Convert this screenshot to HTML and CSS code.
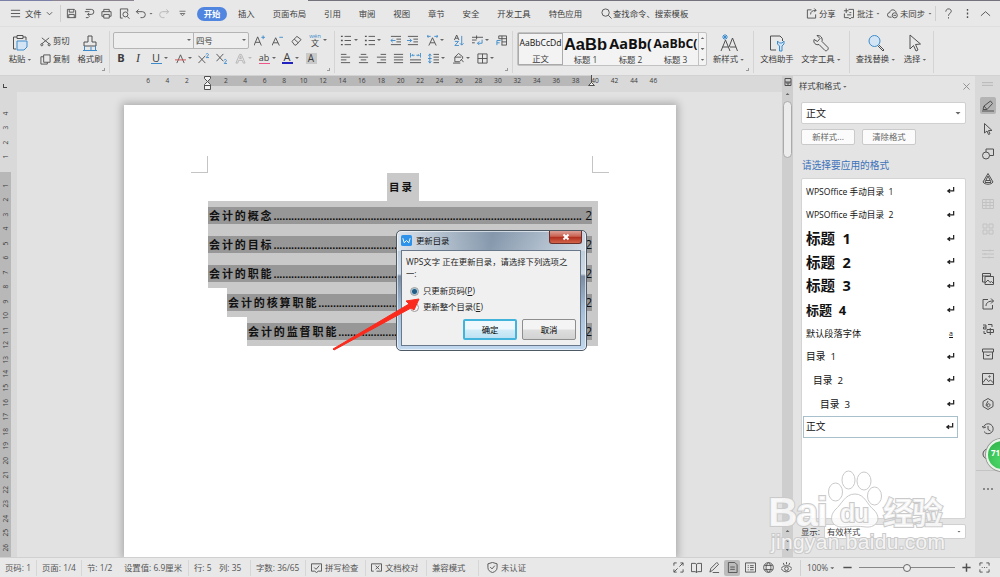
FILE: index.html
```html
<!DOCTYPE html>
<html lang="zh-CN">
<head>
    <meta charset="UTF-8">
    <meta name="viewport" content="width=device-width, initial-scale=1.0">
    <title>WPS文字</title>
    <link rel="stylesheet" href="styles.css">
</head>
<body>
    <svg class="defs">
        <symbol id="paragraph" viewBox="0 0 12 12"><path d="M1 1.500h2M1 6h2M1 10.500h2" stroke-width="1.500"/><path d="M5 1.500h7M5 6h7M5 10.500h7"/></symbol>
        <symbol id="return" viewBox="0 0 10 10"><path d="M8.500 1v4.500H2M4.500 3.500L2 5.500l2.500 2" stroke-width="1.400"/></symbol>
    </svg>

    <div class="tab-strip"><span class="strip-blue"></span><span class="strip-mauve"></span><span class="strip-active"></span><span class="strip-rest"></span></div>

    <div class="menubar">
        <div class="file-menu">
            <svg class="icon" viewBox="0 0 12 12"><path d="M1 2.500h10M1 6h10M1 9.500h10"/></svg>
            <span>文件</span>
            <svg class="chev" viewBox="0 0 8 8"><path d="M1 2.500l3 3 3-3"/></svg>
        </div>
        <div class="quick">
            <svg class="icon" viewBox="0 0 12 12"><path d="M1.500 1.500h7.500l1.500 1.500v7.500h-9zM3.500 1.500v3h5v-3M3 10.500V7h6v3.500"/></svg>
            <svg class="icon" viewBox="0 0 12 12"><path d="M2 1.500h6a2.700 2.700 0 0 1 0 5.500H4M1 4h5M5.500 5.500L4 7l1.500 1.500M2 10.500h2.500L6 9"/></svg>
            <svg class="icon" viewBox="0 0 12 12"><path d="M3 4V1.500h6V4M3 9H1V4h10v5H9M3 7h6v4H3z"/></svg>
            <svg class="icon" viewBox="0 0 12 12"><path d="M4 11H1.500V1h8v3M9 9.500l2.500 2"/><circle cx="7" cy="7" r="2.700"/></svg>
            <svg class="icon" viewBox="0 0 12 12"><path d="M4 1.500L1.500 4 4 6.500M1.500 4H8a3 3 0 0 1 0 6.500H6"/></svg>
            <i class="caret"></i>
            <svg class="icon faint" viewBox="0 0 12 12"><path d="M8 1.500L10.500 4 8 6.500M10.500 4H4a3 3 0 0 0 0 6.500h2"/></svg>
            <svg class="icon small" viewBox="0 0 12 12"><path d="M2 3h8M3 6h6L6 9z"/></svg>
        </div>
        <span class="tab active">开始</span>
        <div class="tabs">
            <span>插入</span><span>页面布局</span><span>引用</span><span>审阅</span><span>视图</span><span>章节</span><span>安全</span><span>开发工具</span><span>特色应用</span>
        </div>
        <div class="search">
            <svg class="icon" viewBox="0 0 12 12"><circle cx="5" cy="5" r="4"/><path d="M8 8l3.500 3.500"/></svg>
            <span>查找命令、搜索模板</span>
        </div>
        <div class="account">
            <svg class="icon" viewBox="0 0 12 12"><path d="M6 2H1.500v9h9V7M5 7c0-3 2-4.500 6-4.500M9 .5l2 2-2 2"/></svg><span>分享</span>
            <svg class="icon" viewBox="0 0 12 12"><path d="M6 1.500h5.500v9H9L7.500 12 6 10.500H1.500V6M1 3h5M3.500.5v5M4.500 7.500h4.500M7 5h2"/></svg><span>批注</span><i class="caret"></i>
            <svg class="icon" viewBox="0 0 12 12"><path d="M5 10H3a2.500 2.500 0 0 1 0-5c.5-4 6-4 7 0"/><circle cx="8.500" cy="8" r="2.800"/><path d="M7 8h3"/></svg><span>未同步</span><i class="caret"></i>
        </div>
        <div class="window-tools">
            <svg class="icon" viewBox="0 0 12 12"><path d="M3 4c0-4 6-4 6-.5C9 6 6 5.500 6 8.500M6 10v1.500"/></svg>
            <svg class="icon" viewBox="0 0 12 12"><path d="M6 1v2M6 5v2M6 9v2" stroke-width="1.500"/></svg>
            <svg class="icon" viewBox="0 0 12 12"><path d="M1 8.500L6 4l5 4.500"/></svg>
        </div>
    </div>

    <div class="ribbon">
        <div class="group clipboard">
            <div class="tool paste">
                <svg class="big" viewBox="0 0 18 18"><path d="M6 3H2.500v12H5M12 3h3v3M6 1.500h6v3H6z"/><path class="blue fill" d="M6 7h10v6l-3 3H6z"/></svg>
                <span>粘贴<i class="caret"></i></span>
            </div>
            <div class="clip-list">
                <span><svg class="icon" viewBox="0 0 12 12"><path d="M2 2l8 6.500M10 2L2 8.500"/><circle cx="2" cy="9.500" r="1.200"/><circle cx="10" cy="9.500" r="1.200"/></svg>剪切</span>
                <span><svg class="icon" viewBox="0 0 12 12"><path d="M4 1h7v8H4zM4 3H1v8h7V9"/></svg>复制</span>
            </div>
            <div class="tool painter">
                <svg class="big" viewBox="0 0 18 18"><path d="M7 8V2h4v6h4v4H3V8z"/><path class="blue" d="M3.500 12v4.500h11V12M10 16v-3M2 16.500h14"/></svg>
                <span>格式刷</span>
            </div>
            <b class="corner"></b>
        </div>

        <div class="group font">
            <div class="font-top">
                <div class="combo"><span class="family"><i class="caret"></i></span><span class="size">四号<i class="caret"></i></span></div>
                <div class="cells cells-a">
                    <svg class="icon" viewBox="0 0 12 12"><path d="M0 11.500L4 2l4 9.500M1.500 8h5"/><path class="blue" d="M8 2.500h4M10 .5v4"/></svg>
                    <svg class="icon" viewBox="0 0 12 12"><path d="M0 11.500L4 3l4 8.500M1.500 8.500h5"/><path class="blue" d="M8 2.500h4"/></svg>
                    <svg class="icon" viewBox="0 0 12 12"><path d="M1 7l5.500-5.500L11 5l-5.500 6H4zM3.500 4.500L8 8.500"/></svg>
                    <span class="wen"><em>wén</em>文</span>
                    <i class="caret"></i>
                </div>
            </div>
            <div class="cells cells-b">
                <b class="glyph">B</b>
                <span class="glyph italic">I</span>
                <span class="glyph under">U</span><i class="caret"></i>
                <svg class="icon" viewBox="0 0 12 12"><path d="M2 11l4-9 4 9"/><path class="red" d="M0 7.500h12"/></svg><i class="caret"></i>
                <svg class="icon" viewBox="0 0 12 12"><path d="M.5 3L8 11M8 3L.5 11"/><path class="blue" d="M9 1.500c0-1.500 2.500-1 2.500.3L9 5h3"/></svg>
                <svg class="icon" viewBox="0 0 12 12"><path d="M.5 1L8 9M8 1L.5 9"/><path class="blue" d="M9 8c0-1.500 2.500-1 2.500.3L9 11.500h3"/></svg>
                <svg class="icon faint" viewBox="0 0 12 12"><path d="M1 11L5 1.500h2L11 11H9L8 8H4l-1 3zM5 6h2L6 3z"/></svg><i class="caret pale"></i>
                <span class="glyph mark">ab</span><i class="caret"></i>
                <span class="glyph color">A</span><i class="caret"></i>
                <span class="glyph shade">A</span>
            </div>
            <b class="corner"></b>
        </div>

        <div class="group para">
            <div class="cells cells-c">
                <svg class="icon"><use href="#paragraph"/></svg><i class="caret"></i>
                <svg class="icon"><use href="#paragraph"/></svg><i class="caret"></i>
                <svg class="icon" viewBox="0 0 12 12"><path d="M1 1.500h11M7 4.500h5M7 7.500h5M1 10.500h11"/><path class="blue" d="M1 6h5M3 4L1 6l2 2"/></svg>
                <svg class="icon" viewBox="0 0 12 12"><path d="M1 1.500h11M7 4.500h5M7 7.500h5M1 10.500h11"/><path class="blue" d="M0 6h5M3 4l2 2-2 2"/></svg>
                <svg class="icon" viewBox="0 0 12 12"><path d="M2 11.500L6 3l4 8.500M3.500 8.500h5"/><path class="blue" d="M0 1.500h4M1.500 0L0 1.500 1.500 3M12 1.500H8M10.500 0L12 1.500 10.500 3"/></svg><i class="caret"></i>
                <svg class="icon" viewBox="0 0 12 12"><path d="M1.500 5.500L4 0l2.500 5.500M2.500 3.500h3"/><path class="blue" d="M2 7h4l-4 4.500h4.500M9.500 1v10M7.500 9l2 2 2-2"/></svg>
                <svg class="icon" viewBox="0 0 12 12"><path d="M0 2.500h12M5 .5v4M0 5.500h5M0 8.500h3"/><path class="blue" d="M11 5v4H6M8 7L6 9l2 2"/></svg><i class="caret"></i>
                <svg class="icon" viewBox="0 0 12 12"><path d="M3 4V1h8.500v10H6M3 4h8.500M6.500 1v10M6.500 7.500h5"/><path class="blue" d="M1 11V6h4M1 8.500h3"/></svg>
            </div>
            <div class="cells cells-d">
                <svg class="icon" viewBox="0 0 12 12"><path d="M1 1.500h6M1 4.500h10M1 7.500h6M1 10.500h10"/></svg>
                <svg class="icon" viewBox="0 0 12 12"><path d="M3 1.500h6M1 4.500h10M3 7.500h6M1 10.500h10"/></svg>
                <svg class="icon" viewBox="0 0 12 12"><path d="M5 1.500h6M1 4.500h10M5 7.500h6M1 10.500h10"/></svg>
                <svg class="icon" viewBox="0 0 12 12"><path d="M1 1.500h10M1 4.500h10M1 7.500h10M1 10.500h10"/></svg>
                <svg class="icon" viewBox="0 0 12 12"><path d="M0 7.500h12M0 10.500h12"/><path class="blue" d="M.5 0v5M11.500 0v5M2 2.500h3M7 2.500h3M3 1.500l-1 1 1 1M9 1.500l1 1-1 1"/></svg>
                <svg class="icon" viewBox="0 0 12 12"><path d="M6 1.500h6M6 4.500h6M6 7.500h6M6 10.500h6"/><path class="blue" d="M2 1v10M.5 3L2 1l1.500 2M.5 9L2 11l1.500-2M0 6h4"/></svg><i class="caret"></i>
                <svg class="icon" viewBox="0 0 12 12"><path d="M2 9.500V4.500L6 .5l4.500 3.500v2L7 9.500zM0 11h8M2 4.500h7M9 7l2.500 3"/></svg><i class="caret"></i>
                <svg class="icon" viewBox="0 0 12 12"><path d="M1 1h10v10H1zM6 1v10M1 6h10"/></svg><i class="caret"></i>
            </div>
            <b class="corner"></b>
        </div>

        <div class="group styles">
            <div class="gallery">
                <div class="style-item selected"><span class="sample">AaBbCcDd</span><span>正文</span></div>
                <div class="style-item"><span class="sample h1">AaBb</span><span>标题 1</span></div>
                <div class="style-item"><span class="sample h2">AaBb(</span><span>标题 2</span></div>
                <div class="style-item"><span class="sample h3">AaBbC(</span><span>标题 3</span></div>
                <div class="spinner"><i class="caret up"></i><i class="caret"></i><i class="caret lined"></i></div>
            </div>
            <div class="tool new-style">
                <svg class="big" viewBox="0 0 18 18"><path d="M1 17L5.500 6 10 17M2.500 13h6M9 13l3.500-9L17.500 17M10 13h6"/><path class="blue" d="M5 0v6M2 3h6M3 1l4 4M7 1L3 5"/></svg>
                <span>新样式<i class="caret"></i></span>
            </div>
            <b class="corner"></b>
        </div>

        <div class="group helpers">
            <div class="tool">
                <svg class="big" viewBox="0 0 18 18"><path d="M8 16H2.500V2H12l2.500 2.500V7"/><path class="blue fill" d="M9.500 7v3l2 2v5h2.500v-5l2-2V7l-2 2h-2.500z"/></svg>
                <span>文档助手</span>
            </div>
            <div class="tool">
                <svg class="big" viewBox="0 0 18 18"><path d="M5 1.500l3 3-2.500 3-3.500-2c-1 3.500 2 6 5 5l6 6c1.500 1 4-1 3-3L10 7.500c1-3.500-1.500-6.500-5-6z"/></svg>
                <span>文字工具<i class="caret"></i></span>
            </div>
        </div>
        <div class="group find">
            <div class="tool">
                <svg class="big" viewBox="0 0 18 18"><circle class="blue fill" cx="7.500" cy="7" r="5.500"/><path d="M12 11l5 5-1 1-5-5"/></svg>
                <span>查找替换<i class="caret"></i></span>
            </div>
            <div class="tool">
                <svg class="big" viewBox="0 0 18 18"><path d="M4 1v14l3.500-3.500L10 17l2-1-2.500-5.500 5-.5z"/></svg>
                <span>选择<i class="caret"></i></span>
            </div>
        </div>
    </div>

    <div class="workspace">
        <div class="editor">
            <div class="ruler">
                <i class="tab-stop"></i>
                <div class="ruler-marks" id="ruler"></div>
                <svg class="marker first" viewBox="0 0 7 14"><path d="M.5.5h6v2l-3 3-3-3zM3.500 5.500l3 3v5h-6v-5zM.5 9.500h6"/></svg>
                <svg class="marker last" viewBox="0 0 7 14"><path d="M3.500 0v8M3.500 7.500l3 3h-6z"/></svg>
            </div>
            <div class="stage">
                <div class="vruler" id="vruler"></div>
                <div class="canvas">
                    <div class="page">
                        <div class="crops"><i></i><i></i></div>
                        <div class="toc-title">目录</div>
                        <div class="toc">
                            <div class="line"><p><span>会计的概念</span><u></u><em>2</em></p></div>
                            <div class="line"><p><span>会计的目标</span><u></u><em>2</em></p></div>
                            <div class="line"><p><span>会计的职能</span><u></u><em>2</em></p></div>
                            <div class="line level2"><p><span>会计的核算职能</span><u></u><em>2</em></p></div>
                            <div class="line level3"><p><span>会计的监督职能</span><u></u><em>2</em></p></div>
                        </div>
                    </div>
                </div>
            </div>
        </div>

        <div class="scrollbar">
            <svg viewBox="0 0 8 8"><path d="M1 .5h6v7H1zM1 4h6M3 4v2h2V4"/></svg>
            <i class="caret up"></i>
            <div class="thumb"></div>
            <div class="scroll-end"><i class="caret up"></i><b></b><i class="caret"></i></div>
        </div>

        <div class="panel">
            <div class="panel-head"><span>样式和格式<i class="caret"></i></span><svg class="chev" viewBox="0 0 8 8"><path d="M.5.5l7 7M7.500.5l-7 7"/></svg></div>
            <div class="select current">正文<i class="caret"></i></div>
            <div class="panel-buttons"><button>新样式...</button><button>清除格式</button></div>
            <div class="panel-label">请选择要应用的格式</div>
            <div class="style-list">
                <div class="row toc-style"><span>WPSOffice 手动目录&nbsp; 1</span><svg><use href="#return"/></svg></div>
                <div class="row toc-style"><span>WPSOffice 手动目录&nbsp; 2</span><svg><use href="#return"/></svg></div>
                <div class="row heading"><span>标题&nbsp; 1</span><svg><use href="#return"/></svg></div>
                <div class="row heading"><span>标题&nbsp; 2</span><svg><use href="#return"/></svg></div>
                <div class="row heading"><span>标题&nbsp; 3</span><svg><use href="#return"/></svg></div>
                <div class="row heading h4"><span>标题&nbsp; 4</span><svg><use href="#return"/></svg></div>
                <div class="row"><span>默认段落字体</span><u>a</u></div>
                <div class="row toc-entry"><span>目录&nbsp; 1</span><svg><use href="#return"/></svg></div>
                <div class="row toc-entry in1"><span>目录&nbsp; 2</span><svg><use href="#return"/></svg></div>
                <div class="row toc-entry in2"><span>目录&nbsp; 3</span><svg><use href="#return"/></svg></div>
                <div class="row toc-entry chosen"><span>正文</span><svg><use href="#return"/></svg></div>
            </div>
            <div class="show"><span>显示:</span><div class="select">有效样式<i class="caret"></i></div></div>
        </div>

        <div class="sidebar">
            <svg class="grip" viewBox="0 0 12 12"><path d="M0 4.500h12M0 7.500h12"/></svg>
            <span class="on"><svg viewBox="0 0 12 12"><path d="M1 9.500l1-3.500 6.500-5 2 2.500L5 9.500zM0 11h12M2 6l3 3.500"/></svg></span>
            <span><svg viewBox="0 0 12 12"><path d="M2.500.5v9.500l2.500-2 1.500 3.500 1.500-.7L6.500 7.500H10z"/></svg></span>
            <span><svg viewBox="0 0 12 12"><circle cx="4" cy="7.500" r="3.500"/><path d="M4 4V1h7.500v6.500h-4"/></svg></span>
            <span><svg viewBox="0 0 12 12"><path d="M6 .5l5 8.500c-2 3-8 3-10 0zM3 9l3-6 3 6M4 7.500h4M3 9.500h6"/></svg></span>
            <span class="dim"><svg viewBox="0 0 12 12"><path d="M.5 1.500h11v9H.5zM.5 4.500h11M.5 7.500h11M4 1.500v9M8 1.500v9"/></svg></span>
            <span class="dim"><svg viewBox="0 0 12 12"><path d="M1 1h4v4H1zM7 1h4v4H7zM1 7h4v4H1zM7 7h4v4H7z"/></svg></span>
            <span class="dim"><svg viewBox="0 0 12 12"><path d="M0 2.500h12M0 6h12M0 9.500h12M8 1.500v2M3 5v2M7 8.500v2"/></svg></span>
            <span><svg viewBox="0 0 12 12"><path d="M3 9H.5V.5h8V3M.5 3h8M3 3.500h8.500v8H3zM3 10l3-3 2 2.500 1.500-1 2 2"/></svg></span>
            <span><svg viewBox="0 0 12 12"><path d="M6 1.500H1v9.500h9.500V7M4 8c0-3 2-5 7.500-5M9 .5L11.500 3 9 5.500"/></svg></span>
            <span><svg viewBox="0 0 12 12"><path d="M1 2h3v4H1.500V4H4M6 1.500h4V4M5 6.500h6.500v3H5zM8.300 5v7M2 8v2.500h2"/></svg></span>
            <span><svg viewBox="0 0 12 12"><path d="M.5 1h11v3H.5zM1.500 4v7h9V4M4 6.500c0 1.500 4 1.500 4 0"/></svg></span>
            <span><svg viewBox="0 0 12 12"><path d="M.5.5h11v11H.5zM1 9.500l3-4 2.500 3L8.500 7l3 3"/><circle cx="7.500" cy="3.500" r=".7"/></svg></span>
            <span><svg viewBox="0 0 12 12"><path d="M6 .5l5 3v5l-5 3-5-3v-5zM6 3L4 7c1 3 4 2 4 0S5 5.500 5 8"/></svg></span>
            <span><svg viewBox="0 0 12 12"><path d="M1.500 4A5 5 0 1 1 2 8.500M0 3l1.500 2L4 4M6 3v3.500l2.500 1.500"/></svg></span>
            <span><svg viewBox="0 0 12 12"><circle cx="6" cy="6" r="5"/><path d="M4.500 4.500c0-2 3-2 3 0L6 7v2"/></svg></span>
            <hr>
            <span class="more"><svg viewBox="0 0 12 12"><path d="M1 6h2M5 6h2M9 6h2" stroke-width="1.800"/></svg></span>
            <div class="ball">71</div>
        </div>
    </div>

    <div class="statusbar">
        <span>页码: 1</span><span class="sep">页面: 1/4</span><span class="sep">节: 1/2</span><span>设置值: 6.9厘米</span><span class="sep">行: 5</span><span>列: 35</span><span class="sep">字数: 36/65</span>
        <span class="sep"><svg viewBox="0 0 12 12"><path d="M4 10H.5V2h11v8H8l-2 1.500zM3.500 6l2 2L9 4"/></svg>拼写检查</span>
        <span class="sep"><svg viewBox="0 0 12 12"><path d="M3 10H.5V2h11v8H6M5 4l4 4M9 4L5 8"/></svg>文档校对</span>
        <span class="sep">兼容模式</span>
        <span class="sep check"><svg viewBox="0 0 12 12"><path d="M6 .5l5 1.500v4c0 3-2 4.500-5 5.500C3 10.500 1 9 1 6V2zM3.500 5.500l2 2 3-3.500"/></svg>未认证</span>
        <div class="views">
            <i><svg viewBox="0 0 12 12"><path d="M1 4V1h3M8 1h3v3M11 8v3H8M4 11H1V8M7 5l4-4M5 7l-4 4"/></svg></i>
            <i><svg viewBox="0 0 12 12"><path d="M.5 1.500h4L6 2.500l1.500-1h4v9h-4L6 11.500l-1.500-1h-4zM6 2.500v9"/></svg></i>
            <i><svg viewBox="0 0 12 12"><path d="M1 11l1-4 6.500-6.500 2 2L4 9zM4 11.500h7"/></svg></i>
            <i class="on"><svg viewBox="0 0 12 12"><path d="M1.500.5h7l2.500 2.500v8.500H1.500zM3.500 5.500h5M3.500 8h5"/></svg></i>
            <i><svg viewBox="0 0 12 12"><path d="M.5 1h11v10H.5zM3 4h1M5.500 4H9.500M3 6h1M5.500 6H9.500M3 8.500h1M5.500 8.500H9.500"/></svg></i>
            <i><svg viewBox="0 0 12 12"><circle cx="6" cy="6" r="5.300"/><path d="M1.500 3.700h9M1.500 8.300h9M6 .7c-3.500 3-3.500 7.600 0 10.600M6 .7c3.500 3 3.500 7.600 0 10.600"/></svg></i>
            <i><svg viewBox="0 0 12 12"><path d="M0 7c3-4 9-4 12 0-3 5-9 5-12 0M6 0v2.500M2.500 1l1 2.500M9.500 1l-1 2.500"/><circle cx="6" cy="7.300" r="2"/></svg></i>
        </div>
        <div class="zoom">
            <span>100%<i class="caret"></i></span>
            <svg viewBox="0 0 12 12"><path d="M1.500 6h9" stroke-width="1.600"/></svg>
            <div class="slider"><b></b></div>
            <svg viewBox="0 0 12 12"><path d="M1.500 6h9M6 1.500v9" stroke-width="1.600"/></svg>
            <svg viewBox="0 0 12 12"><path d="M1 4V1h3M8 1h3v3M11 8v3H8M4 11H1V8M5.500 6h1M3 6h1M8 6h1"/></svg>
        </div>
    </div>

    <div class="dialog">
        <div class="dialog-title">
            <svg viewBox="0 0 12 12"><rect width="12" height="12" rx="2"/><path d="M2 3.500l1.500 5L6 6l2.500 2.500 1.500-5"/></svg>
            <span>更新目录</span>
            <button class="close"><svg viewBox="0 0 8 8"><path d="M1.500 1.500l5 5M6.500 1.500l-5 5"/></svg></button>
        </div>
        <div class="dialog-body">
            <p>WPS文字 正在更新目录，请选择下列选项之一:</p>
            <label><i class="radio checked"></i>只更新页码(<u>P</u>)</label>
            <label><i class="radio"></i>更新整个目录(<u>E</u>)</label>
            <div class="actions"><button class="ok">确定</button><button>取消</button></div>
        </div>
    </div>

    <svg class="arrow" viewBox="0 0 90 54"><path d="M1 52L77 7l-3-3 13-2-5 11-3-2L2 53z"/></svg>

    <svg class="watermark" viewBox="0 0 190 96">
        <ellipse cx="68.500" cy="22" rx="7" ry="9"/><ellipse cx="81.500" cy="10" rx="6.500" ry="9"/><ellipse cx="97" cy="11" rx="7" ry="9"/><ellipse cx="107.500" cy="26" rx="7" ry="9"/>
        <path d="M88 24c10 0 12 11 19 16 8 8 3 18-8 17-7-1-15-1-22 0-12 1-16-9-9-17 7-6 10-16 20-16z"/>
        <text class="brand" x="1" y="56" textLength="60">Bai</text>
        <text class="du" x="73" y="52" textLength="29">du</text>
        <text class="brand cn" x="116" y="54" textLength="60">经验</text>
        <text class="url" x="4" y="79" textLength="174">jingyan.baidu.com</text>
    </svg>

    <script>
        const ruler = document.getElementById('ruler');
        for (let n = -6; n <= 46; n += 2) {
            const mark = document.createElement('span');
            mark.textContent = n === 0 ? '' : Math.abs(n);
            ruler.appendChild(mark);
        }

        const vruler = document.getElementById('vruler');
        for (let n = -4; n <= 26; n++) {
            if (n === 0) continue;
            const mark = document.createElement('span');
            mark.textContent = Math.abs(n);
            vruler.appendChild(mark);
        }

        // dot leaders run from the entry to its page number
        document.querySelectorAll('.toc u').forEach(leader => {
            leader.textContent = '.'.repeat(Math.floor(leader.clientWidth / 2.96));
        });
    </script>
</body>
</html>
```
FILE: styles.css
```css
* {
    box-sizing: border-box;
}
body {
    margin: 0;
    width: 1000px;
    height: 577px;
    overflow: hidden;
    position: relative;
    background: #e8e8e8;
    color: #3c3c3c;
    font-family: "Open Sans", "Noto Sans CJK SC", sans-serif;
    font-size: 8.4px;
    line-height: 12px;
    white-space: nowrap;
}
svg {
    fill: none;
    stroke: #505050;
    stroke-width: 1;
    flex: none;
}
.defs {
    display: none;
}
.blue {
    stroke: #3d8bcb;
}
.red {
    stroke: #d05050;
}
.fill {
    fill: #d3e5f5;
}
.icon {
    width: 11px;
    height: 11px;
}
.icon.small {
    width: 9px;
}
.faint {
    stroke: #b5b5b5;
}
.big {
    width: 18px;
    height: 18px;
}
.chev {
    width: 7px;
    height: 7px;
}
.caret {
    display: inline-block;
    flex: none;
    width: 4px;
    height: 2px;
    margin-left: 2px;
    vertical-align: middle;
    background: #666;
    clip-path: polygon(0 0, 100% 0, 50% 100%);
}
.caret.up {
    clip-path: polygon(50% 0, 100% 100%, 0 100%);
}
.pale {
    background: #bbb;
}

/* title strip and menu */
.tab-strip {
    display: flex;
    height: 1px;
}
.strip-blue {
    width: 52px;
    background: #7a80a8;
}
.strip-mauve {
    width: 82px;
    background: #8c8490;
}
.strip-active {
    width: 174px;
    background: #e8e8e8;
}
.strip-rest {
    flex: 1;
    background: #76727c;
}
.menubar {
    display: flex;
    align-items: center;
    height: 26px;
    border-bottom: 1px solid #dfdfdf;
}
.file-menu {
    display: flex;
    align-items: center;
    gap: 4px;
    width: 61px;
    height: 17px;
    padding-left: 10px;
    border-right: 1px solid #cfcfcf;
}
.quick {
    display: grid;
    grid-template-columns: repeat(4, 17.5px) 15px 6px 20px 16px;
    justify-items: center;
    align-items: center;
    width: 136px;
    padding-left: 2px;
}
.quick .caret {
    margin-left: 0;
}
.tab.active {
    width: 30px;
    border-radius: 7px;
    background: #5086e0;
    color: #fff;
    font-weight: bold;
    text-align: center;
    line-height: 14px;
}
.tabs {
    display: flex;
    gap: 17.9px;
    width: 374px;
    padding-left: 11px;
}
.search {
    display: flex;
    align-items: center;
    gap: 1px;
    width: 205px;
}
.account {
    display: grid;
    grid-template-columns: 13px 24px 14px 17px 13px 13px 26px 9px;
    align-items: center;
    width: 130px;
    height: 15px;
    border-right: 1px solid #cfcfcf;
}
.window-tools {
    display: flex;
    gap: 7.5px;
    padding-left: 7px;
}

/* ribbon */
.ribbon {
    display: flex;
    height: 49px;
    padding-top: 4px;
    border-bottom: 1px solid #d2d2d2;
}
.group {
    display: flex;
    position: relative;
    height: 42px;
    border-right: 1px solid #d4d4d4;
}
.corner {
    position: absolute;
    right: 4px;
    bottom: 2px;
    width: 3px;
    height: 3px;
    border-right: 1px solid #999;
    border-bottom: 1px solid #999;
}
.tool {
    display: flex;
    flex-direction: column;
    align-items: center;
    padding-top: 3px;
}
.tool .big {
    margin-bottom: 1px;
}
.clipboard {
    width: 110px;
}
.paste {
    width: 40px;
}
.clip-list {
    display: grid;
    grid-template-rows: 18px 18px;
    align-items: center;
    width: 32px;
}
.clip-list span {
    display: flex;
    align-items: center;
    gap: 2px;
    padding-top: 2px;
}
.painter {
    width: 36px;
}
.font {
    flex-direction: column;
    width: 225px;
    padding-left: 3px;
}
.font-top {
    display: flex;
    align-items: center;
    height: 18px;
}
.combo {
    display: flex;
    width: 136px;
    height: 17px;
    border: 1px solid #b4b4b4;
    border-radius: 2px;
    background: #eee;
    line-height: 15px;
}
.family, .size {
    display: flex;
    align-items: center;
    justify-content: flex-end;
    width: 80px;
    padding-right: 2px;
    border-right: 1px solid #b4b4b4;
}
.size {
    flex: 1;
    justify-content: space-between;
    padding-left: 2px;
    border: none;
}
.cells {
    display: grid;
    justify-content: start;
    align-items: center;
    height: 18px;
}
.cells .caret {
    margin: 0;
}
.cells-a {
    grid-template-columns: 18px 19px 19px 13.5px 4px;
    padding-left: 4.5px;
}
.cells-b {
    grid-template-columns: 17px 18px 13.5px 10.5px 13.5px 9.5px 18px 19px 13.5px 10.5px 13.5px 9.5px 13.5px 10.5px 11px;
    padding-left: 2.5px;
}
.wen {
    display: flex;
    flex-direction: column;
    align-items: center;
    width: 11px;
    font-size: 8px;
    line-height: 7px;
}
.wen em {
    color: #3d8bcb;
    font-size: 6px;
    font-style: normal;
    line-height: 5px;
}
.glyph {
    width: 11px;
    font-size: 11px;
    line-height: 12px;
    text-align: center;
}
.italic {
    font-family: "Liberation Serif", serif;
    font-style: italic;
    font-size: 12px;
}
.under {
    border-bottom: 1px solid #3d8bcb;
    line-height: 10px;
}
.mark {
    font-size: 9px;
    line-height: 10px;
    border-bottom: 1px solid #e58;
}
.color {
    line-height: 10px;
    border-bottom: 2px solid #2222c0;
}
.shade {
    height: 11px;
    background: #c9c9c9;
    font-size: 10px;
    line-height: 11px;
}
.para {
    flex-direction: column;
    width: 178px;
    padding-left: 4.5px;
}
.cells-c {
    grid-template-columns: 14.5px 9.5px 13.5px 12.5px 17px 20px 13.5px 12.5px 19px 13.5px 10.5px 11px;
}
.cells-d {
    grid-template-columns: 18px 18px 17px 17px 18px 13.5px 11.5px 13.5px 10.5px 13.5px 4px;
}
.styles {
    width: 241px;
}
.gallery {
    display: flex;
    width: 190px;
    height: 34px;
    margin: 1px 0 0 4px;
    border: 1px solid #c2c2c2;
    border-radius: 2px;
    background: #f3f3f3;
}
.style-item {
    display: flex;
    flex-direction: column;
    align-items: center;
    width: 45px;
    overflow: hidden;
    line-height: 11px;
}
.style-item.selected {
    border: 1px solid #aaa;
}
.sample {
    height: 21px;
    color: #111;
    font-size: 8.6px;
    line-height: 21px;
}
.selected .sample {
    line-height: 19px;
    height: 20px;
}
.sample.h1 {
    font: bold 16.5px/22px "Liberation Sans", sans-serif;
}
.sample.h2 {
    font: bold 14.5px/22px "Open Sans", sans-serif;
}
.sample.h3 {
    font: bold 12.3px/22px "Open Sans", sans-serif;
}
.spinner {
    display: flex;
    flex: 1;
    flex-direction: column;
    align-items: center;
    justify-content: space-around;
    border-left: 1px solid #c2c2c2;
}
.spinner .caret {
    margin: 0;
}
.new-style {
    flex: 1;
    padding-right: 3px;
}
.helpers {
    width: 96px;
}
.helpers .tool {
    width: 46px;
}
.helpers .tool + .tool {
    width: 42px;
}
.find {
    width: 84px;
    padding-left: 3px;
}
.find .tool {
    width: 45px;
}
.find .tool + .tool {
    width: 34px;
}

/* document area */
.workspace {
    display: flex;
    height: 481px;
}
.editor {
    width: 782px;
    background: #d9d9d9;
}
.ruler {
    position: relative;
    height: 16px;
    padding-left: 138.3px;
    background: linear-gradient(#b8b8b8, #b8b8b8) 207px 0 / 385px 10px no-repeat;
}
.tab-stop {
    position: absolute;
    left: 3px;
    top: 8px;
    width: 4px;
    height: 4px;
    border-left: 1px solid #444;
    border-bottom: 1px solid #444;
}
.ruler-marks {
    display: flex;
    font-size: 6.6px;
    line-height: 10px;
}
.ruler-marks span {
    flex: none;
    width: 19.45px;
    text-align: center;
}
.marker {
    position: absolute;
    top: 0;
    width: 7px;
    height: 14px;
    fill: #f4f4f4;
}
.first {
    left: 204px;
}
.last {
    left: 588px;
    top: -1px;
}
.stage {
    display: flex;
    height: 465px;
}
.vruler {
    width: 17px;
    padding-top: 14px;
    background: linear-gradient(#b8b8b8, #b8b8b8) 0 80px / 11px 400px no-repeat;
}
.vruler span {
    display: block;
    width: 11px;
    height: 14.48px;
    font-size: 6.6px;
    line-height: 11px;
    text-align: center;
    writing-mode: vertical-rl;
    transform: rotate(180deg);
}
.vruler span:nth-child(4) {
    margin-bottom: 14px;
}
.canvas {
    flex: 1;
    padding: 13px 0 0 107px;
    overflow: hidden;
    background: #e2e2e2;
}
.page {
    width: 552px;
    height: 452px;
    padding-top: 51px;
    background: #fff;
    box-shadow: 0 0 8px 2px rgba(0, 0, 0, 0.25);
}
.crops {
    display: flex;
    justify-content: space-between;
    height: 17px;
    padding: 0 67px;
}
.crops i {
    width: 17px;
    border: 1px solid #c4c4c4;
    border-width: 0 1px 1px 0;
}
.crops i + i {
    border-width: 0 0 1px 1px;
}
.toc-title {
    width: 32px;
    height: 28px;
    margin-left: 263px;
    padding-left: 2px;
    background: #c9c9c9;
    color: #111;
    font-size: 10.5px;
    font-weight: bold;
    letter-spacing: 2px;
    line-height: 28px;
}
.toc {
    width: 390px;
    margin-left: 84px;
    color: #111;
    font-size: 11px;
}
.line {
    height: 29px;
    padding: 6px 6px 6px 0;
    background: #c9c9c9;
}
.line p {
    display: flex;
    align-items: center;
    height: 17px;
    margin: 0;
    padding-left: 1px;
    background: #979797;
}
.line span {
    font-weight: bold;
    letter-spacing: 1.9px;
}
.line u {
    flex: 1;
    text-decoration: none;
    font-family: "Liberation Sans", sans-serif;
    font-weight: bold;
    letter-spacing: -0.12px;
}
.line em {
    font-style: normal;
    font-size: 12px;
}
.level2 {
    margin-left: 19px;
}
.level3 {
    margin-left: 39px;
}
.scrollbar {
    display: flex;
    flex-direction: column;
    align-items: center;
    width: 11px;
    padding-top: 2px;
    background: #cecece;
}
.scrollbar svg {
    width: 8px;
    height: 8px;
}
.scrollbar .caret {
    margin: 7px 0 6px;
}
.thumb {
    width: 9px;
    height: 57px;
    border: 1px solid #aaa;
    border-radius: 5px;
    background: #ececec;
}
.scroll-end {
    display: flex;
    flex-direction: column;
    align-items: center;
    margin-top: auto;
}
.scroll-end b {
    width: 4px;
    height: 4px;
    border: 1px solid #666;
    border-radius: 50%;
}

/* styles pane */
.panel {
    width: 182px;
    padding: 4px 9px 0 8px;
    background: #e4e4e4;
}
.panel-head {
    display: flex;
    align-items: center;
    justify-content: space-between;
    height: 12px;
    margin: 0 -4px 10px -2px;
}
.panel-head svg {
    stroke: #888;
}
.select {
    display: flex;
    align-items: center;
    justify-content: space-between;
    height: 15px;
    padding: 0 4px 0 3px;
    border: 1px solid #d0d0d0;
    border-radius: 2px;
    background: #fff;
}
.select.current {
    height: 22px;
    padding-left: 4px;
    color: #222;
    font-size: 10px;
}
.current .caret {
    width: 6px;
    height: 3px;
}
.panel-buttons {
    display: flex;
    gap: 7px;
    margin-top: 5px;
}
.panel-buttons button {
    width: 54px;
    height: 16px;
    padding: 0;
    border: 1px solid #cacaca;
    border-radius: 2px;
    background: #fbfbfb;
    color: #666;
    font: inherit;
}
.panel-label {
    margin: 15px 0 6px 1px;
    color: #3c72ba;
    font-size: 9.7px;
}
.style-list {
    height: 341px;
    padding: 1px 7px 0 2px;
    border: 1px solid #d4d4d4;
    border-radius: 2px;
    background: #fff;
    color: #111;
}
.row {
    display: flex;
    align-items: center;
    justify-content: space-between;
    height: 23.65px;
    padding: 0 3px 0 2px;
}
.row svg {
    width: 9px;
    height: 9px;
    margin-bottom: 2px;
    stroke: #222;
}
.row u {
    margin-right: 2px;
    font-size: 7px;
}
.row span {
    font-size: 9.2px;
}
.toc-style span {
    font-size: 8.6px;
}
.row.heading span {
    font-size: 14.5px;
    font-weight: bold;
}
.row.h4 span {
    font-size: 13px;
}
.toc-entry span {
    font-size: 9.7px;
}
.in1 span {
    padding-left: 7px;
}
.in2 span {
    padding-left: 14px;
}
.chosen {
    height: 22px;
    margin: 0 0 0 -1px;
    border: 1px solid #a8c0cc;
}
.show {
    display: flex;
    align-items: center;
    margin-top: 5px;
}
.show .select {
    flex: 1;
    margin-left: 4px;
    padding-left: 2px;
}

/* icon rail */
.sidebar {
    position: relative;
    display: flex;
    flex-direction: column;
    align-items: center;
    width: 25px;
    background: #d9d9d9;
}
.grip {
    width: 11px;
    height: 12px;
    margin: 2px 0 3px;
    stroke: #b5b5b5;
}
.sidebar span {
    display: flex;
    align-items: center;
    justify-content: center;
    width: 16px;
    height: 24.95px;
}
.sidebar span svg {
    width: 12px;
    height: 12px;
}
.sidebar .on {
    height: 17px;
    margin: 4px 0 3px;
    border-radius: 2px;
    background: #b4b4b4;
}
.dim svg {
    stroke: #c2c2c2;
}
.sidebar hr {
    width: 23px;
    margin: 4px 0 5px;
    border: 0;
    border-top: 1px solid #c4c4c4;
}
.sidebar .more svg {
    stroke: #888;
}
.ball {
    position: absolute;
    left: 11px;
    top: 363px;
    width: 32px;
    height: 32px;
    padding-left: 3px;
    border: 2px solid #e8f4e8;
    border-radius: 50%;
    background: radial-gradient(circle at 50% 70%, #4cd86a, #2fb048);
    box-shadow: 0 0 0 1px #999;
    color: #fff;
    font-size: 8px;
    font-weight: bold;
    line-height: 24px;
}

/* status bar */
.statusbar {
    display: grid;
    grid-template-columns: 31px 45px 43px 64px 31px 31px 55px 60px 61px 52px 192px 131px 1fr;
    align-items: center;
    height: 20px;
    padding-left: 5px;
    border-top: 1px solid #d0d0d0;
    color: #555;
}
.statusbar > span {
    display: flex;
    align-items: center;
    gap: 3px;
    height: 16px;
}
.statusbar > span.sep {
    padding-left: 5px;
    border-left: 1px solid #d6d6d6;
}
.statusbar > span.check {
    padding-left: 8px;
}
.statusbar svg {
    width: 11px;
    height: 11px;
}
.views {
    display: flex;
    gap: 2px;
    border-right: 1px solid #d0d0d0;
}
.views i {
    display: flex;
    align-items: center;
    justify-content: center;
    width: 16px;
    height: 16px;
}
.views .on {
    border-radius: 2px;
    background: #bcbcbc;
}
.zoom {
    display: flex;
    align-items: center;
    padding-left: 6px;
}
.zoom > span {
    width: 35px;
}
.slider {
    display: flex;
    align-items: center;
    justify-content: center;
    width: 96px;
    height: 9px;
    margin: 0 6px;
    background: linear-gradient(#888, #888) 0 4px / 100% 1px no-repeat;
}
.slider b {
    width: 8px;
    height: 8px;
    border: 1px solid #666;
    border-radius: 50%;
    background: #eee;
}
.zoom .slider + svg + svg {
    margin-left: 7px;
}

/* update dialog */
.dialog {
    position: absolute;
    left: 396px;
    top: 230px;
    width: 191px;
    height: 121px;
    padding: 0 5px 5px 4px;
    border: 1px solid #4e5966;
    border-radius: 5px;
    background: linear-gradient(100deg, rgba(255, 255, 255, 0.5), rgba(70, 95, 120, 0.45) 50%, rgba(255, 255, 255, 0.3)) 0 0 / 100% 20px no-repeat, linear-gradient(#b4c3d4 0, #cfdbe6 36%, #7b8ca2 38%, #a4bdd6 65%, #c1d8ee);
    box-shadow: inset 0 0 0 1px rgba(255, 255, 255, 0.6);
    color: #222;
}
.dialog-title {
    display: flex;
    align-items: center;
    gap: 4px;
    height: 19px;
    color: #111;
}
.dialog-title > svg {
    width: 11px;
    height: 11px;
    stroke: none;
    fill: #2d92ea;
}
.dialog-title > svg path {
    fill: none;
    stroke: #fff;
}
.dialog button {
    padding: 0;
    font: inherit;
}
.dialog .close {
    display: flex;
    align-items: center;
    justify-content: center;
    align-self: flex-start;
    width: 33px;
    height: 13px;
    margin-left: auto;
    margin-right: -1px;
    border: 1px solid #6b2f2c;
    border-top: none;
    border-radius: 0 0 3px 3px;
    background: linear-gradient(#dda096, #ca6252 45%, #b02d1d 50%, #d3644c);
}
.close svg {
    width: 8px;
    height: 8px;
    stroke: #fff;
    stroke-width: 2;
}
.dialog-body {
    height: 96px;
    padding: 5px 4px 0;
    border: 1px solid #69788a;
    background: #f0f0f0;
}
.dialog-body p {
    margin: 0 0 3px;
    font-size: 8.35px;
    white-space: normal;
}
.dialog-body label {
    display: flex;
    align-items: center;
    height: 16px;
    padding-left: 4px;
}
.radio {
    width: 9px;
    height: 9px;
    margin-right: 4px;
    border: 1px solid #9a9a9a;
    border-radius: 50%;
    background: #f8f8f8;
}
.radio.checked {
    background: radial-gradient(circle, #1f5c86 0 2px, #a8c9dc 3px, #f8f8f8 4px);
}
.actions {
    display: flex;
    justify-content: flex-end;
    gap: 5px;
    margin-top: 4px;
}
.dialog .actions button {
    width: 54px;
    height: 21px;
    border: 1px solid #8e8e8e;
    border-radius: 2px;
    background: linear-gradient(#f4f4f4 48%, #dedede 52%, #d2d2d2);
}
.dialog .actions .ok {
    border: 2px solid #42b4dc;
    background: linear-gradient(#eef8fd 48%, #d2ecf8 52%, #bde2f4);
}
.arrow {
    position: absolute;
    left: 332px;
    top: 297px;
    width: 90px;
    height: 54px;
    fill: #fa2a1c;
    stroke: #fa2a1c;
}

/* watermark over everything */
.watermark {
    position: absolute;
    left: 767px;
    top: 470px;
    width: 190px;
    height: 96px;
    overflow: visible;
    stroke: #cacaca;
    fill: rgba(255, 255, 255, 0.8);
}
.watermark text {
    paint-order: stroke;
    stroke-width: 2;
    font-family: "Liberation Sans", "Noto Sans CJK SC", sans-serif;
}
.brand {
    font-size: 41px;
    font-weight: bold;
}
.brand.cn {
    font-size: 31px;
}
.du {
    font-size: 25px;
    font-weight: bold;
}
.url {
    font-size: 21px;
}
```
